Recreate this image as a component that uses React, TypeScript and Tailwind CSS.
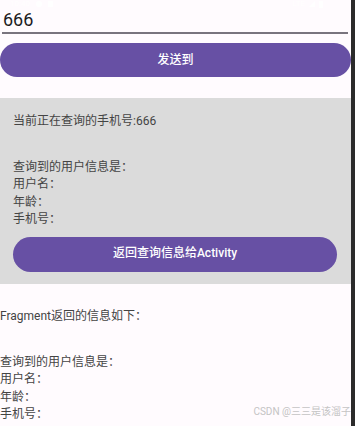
import React from "react";

const font = { fontFamily: 'Roboto, "Noto Sans CJK SC", sans-serif' };

export default function App() {
  return (
    <div className="flex w-[355px] h-[426px] overflow-hidden" style={font}>
      <div className="relative w-[351px] h-[426px] bg-[#fffbfe] flex flex-col">
        {/* status bar overlay */}
        <div className="absolute top-0 left-0 right-0 h-[8px] flex items-center justify-between px-[10px] text-[8px] leading-[8px] text-white">
          <div className="flex items-center gap-[6px]">
            <span>10:40</span>
            <span className="w-[6px] h-[6px] rounded-full bg-white"></span>
            <span className="w-[5px] h-[6px] bg-white"></span>
          </div>
          <div className="flex items-center gap-[4px] pr-[18px]">
            <span>LTE</span>
            <span className="w-0 h-0 border-l-[6px] border-l-transparent border-b-[6px] border-b-white"></span>
            <span className="w-[4px] h-[7px] bg-white"></span>
          </div>
        </div>

        {/* input */}
        <div className="mt-[8px] ml-[2px] w-[346px] border-b-2 border-[#79747e]">
          <div className="pl-[1px] h-[24px] text-[18px] leading-[24px] text-[#1c1b1f]">666</div>
        </div>

        {/* button 1 */}
        <button className="mt-[9px] h-[34px] w-full rounded-full bg-[#6750a4] text-white text-[12px] font-medium flex items-center justify-center">
          发送到
        </button>

        {/* fragment panel */}
        <div className="mt-[21px] h-[186px] bg-[#dbdbdb] px-[13px] pt-[15px] text-[12px] leading-[17.5px] text-[#444444]">
          <div>当前正在查询的手机号:666</div>
          <div className="mt-[28px]">
            <div>查询到的用户信息是：</div>
            <div>用户名：</div>
            <div>年龄：</div>
            <div>手机号：</div>
          </div>
          <button className="mt-[8px] h-[35px] w-[324px] rounded-full bg-[#6750a4] text-white text-[12px] font-medium flex items-center justify-center">
            返回查询信息给Activity
          </button>
        </div>

        {/* bottom info */}
        <div className="pt-[24px] text-[12px] leading-[17.5px] text-[#444444]">
          <div>Fragment返回的信息如下：</div>
          <div className="mt-[28px]">
            <div>查询到的用户信息是：</div>
            <div>用户名：</div>
            <div>年龄：</div>
            <div>手机号：</div>
          </div>
        </div>

        <div className="absolute right-0 top-[405px] text-[10px] leading-[14px] text-[#c4c4c4]">CSDN @三三是该溜子</div>
      </div>
      <div className="w-[4px] h-[426px] bg-[#2b2b2b]"></div>
    </div>
  );
}
